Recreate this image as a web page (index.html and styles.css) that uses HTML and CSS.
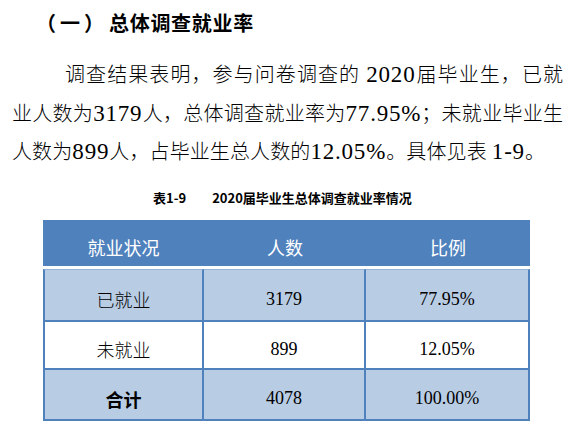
FILE: index.html
```html
<!DOCTYPE html>
<html lang="zh-CN">
<head>
<meta charset="utf-8">
<title>总体调查就业率</title>
<link rel="stylesheet" href="styles.css">
</head>
<body>
<h2 class="title"><span class="paren">（一）</span>总体调查就业率</h2>
<div class="para">
  <div class="line l1">调查结果表明，参与问卷调查的 <span class="n">2020</span>届毕业生，已就</div>
  <div class="line l2">业人数为<span class="n">3179</span>人，总体调查就业率为<span class="n">77.95%</span>；未就业毕业生</div>
  <div class="line l3">人数为<span class="n">899</span>人，占毕业生总人数的<span class="n">12.05%</span>。具体见表 <span class="n">1-9</span>。</div>
</div>
<div class="caption"><span class="cap-no">表1-9</span><span>2020届毕业生总体调查就业率情况</span></div>
<table class="tbl">
  <thead>
    <tr><th class="c1">就业状况</th><th class="c2">人数</th><th class="c3">比例</th></tr>
  </thead>
  <tbody>
    <tr class="r1 shade"><td class="c1 zh">已就业</td><td class="c2">3179</td><td class="c3">77.95%</td></tr>
    <tr class="r2"><td class="c1 zh">未就业</td><td class="c2">899</td><td class="c3">12.05%</td></tr>
    <tr class="r3 shade"><td class="c1 total">合计</td><td class="c2">4078</td><td class="c3">100.00%</td></tr>
  </tbody>
</table>
</body>
</html>
```
FILE: styles.css
```css
html, body {
  margin: 0;
  padding: 0;
  background: #ffffff;
}
body {
  width: 577px;
  color: #000;
}
.title {
  margin: 0;
  padding: 8px 0 0 36px;
  font-family: "Noto Sans CJK SC", sans-serif;
  font-weight: bold;
  font-size: 20px;
  line-height: 30px;
  letter-spacing: 0.7px;
}
.paren {
  letter-spacing: 4px;
  margin-right: 1px;
}
.para {
  margin-top: 18px;
  font-family: "Liberation Serif", "Noto Sans CJK SC", serif;
  font-weight: 300;
  font-size: 20px;
  line-height: 37.5px;
}
.line {
  text-align: justify;
  text-align-last: justify;
  white-space: nowrap;
}
.l1 { margin-left: 65px; width: 498px; }
.l2 { margin-left: 12px; width: 551px; }
.l3 { margin-left: 12px; width: 533px; }
.n {
  font-size: 23px;
  font-weight: normal;
  letter-spacing: 0.8px;
}
.caption {
  margin-top: 16px;
  padding-left: 153px;
  display: flex;
  gap: 26px;
  font-family: "Noto Sans CJK SC", sans-serif;
  font-weight: bold;
  font-size: 13px;
  line-height: 20px;
}
.tbl {
  margin: 12px 0 0 43px;
  width: 487px;
  border-collapse: separate;
  border-spacing: 0;
  table-layout: fixed;
}
.tbl th, .tbl td {
  box-sizing: border-box;
  padding: 0;
  text-align: center;
  vertical-align: middle;
}
.tbl th {
  height: 49px;
  padding-top: 9px;
  background: #4f81bd;
  color: #ffffff;
  font-family: "Noto Sans CJK SC", sans-serif;
  font-weight: normal;
  font-size: 18px;
  border-bottom: 3px solid #ffffff;
}
.tbl th.c1 { width: 161px; }
.tbl th.c2 { width: 162px; }
.tbl th.c3 { width: 164px; }
.tbl td {
  font-family: "Liberation Serif", "Noto Sans CJK SC", serif;
  font-size: 18px;
  color: #000;
  border-right: 2px solid #4f81bd;
  border-bottom: 2px solid #4f81bd;
  padding-top: 9px;
}
.tbl td.c1 { border-left: 2px solid #4f81bd; }
.tbl td.zh { font-weight: 300; }
.tbl td.total {
  font-family: "Noto Sans CJK SC", sans-serif;
  font-weight: bold;
}
.shade td { background: #b8cce4; }
.r1 td { height: 53px; border-top: 1px solid #95b3d7; }
.r2 td { height: 48px; }
.r3 td { height: 51px; }
```
